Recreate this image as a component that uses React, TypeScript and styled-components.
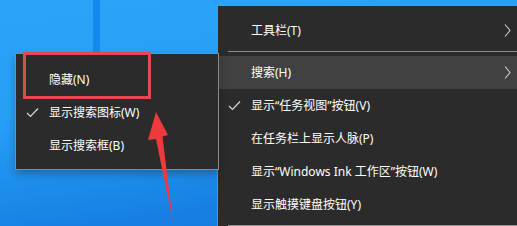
import styled, { createGlobalStyle } from "styled-components";

const GlobalStyle = createGlobalStyle`
  html, body {
    margin: 0;
    padding: 0;
    overflow: hidden;
  }

  body {
    font-family: "Noto Sans", "Noto Sans CJK SC", sans-serif;
  }
`;

type MenuItemData = {
  label: string;
  checked?: boolean;
  submenu?: boolean;
  active?: boolean;
  separatorAfter?: boolean;
};

const taskbarItems: MenuItemData[] = [
  { label: "工具栏(T)", submenu: true, separatorAfter: true },
  { label: "搜索(H)", submenu: true, active: true },
  { label: "显示“任务视图”按钮(V)", checked: true },
  { label: "在任务栏上显示人脉(P)" },
  { label: "显示“Windows Ink 工作区”按钮(W)" },
  { label: "显示触摸键盘按钮(Y)", separatorAfter: true },
];

const searchItems: MenuItemData[] = [
  { label: "隐藏(N)" },
  { label: "显示搜索图标(W)", checked: true },
  { label: "显示搜索框(B)" },
];

function CheckMark() {
  return (
    <svg width="13" height="11" viewBox="0 0 13 11">
      <path d="M1 6 L4.5 9.5 L12 1.5" fill="none" stroke="#d8d8d8" strokeWidth="1.2" />
    </svg>
  );
}

function Chevron() {
  return (
    <svg width="7" height="13" viewBox="0 0 7 13">
      <path d="M1 0.5 L6 6.5 L1 12.5" fill="none" stroke="#cfcfcf" strokeWidth="1.1" />
    </svg>
  );
}

function Menu({ items }: { items: MenuItemData[] }) {
  return (
    <>
      {items.map((item) => (
        <div key={item.label}>
          <Row active={item.active}>
            <CheckSlot>{item.checked && <CheckMark />}</CheckSlot>
            <Label>{item.label}</Label>
            {item.submenu && (
              <ArrowSlot>
                <Chevron />
              </ArrowSlot>
            )}
          </Row>
          {item.separatorAfter && <Separator />}
        </div>
      ))}
    </>
  );
}

function RedArrow() {
  return (
    <ArrowSvg width="40" height="120" viewBox="140 108 40 120">
      <polygon
        points="156,112 168,135 162.5,136.5 173,223 156,139 148,140"
        fill="#ee3a3c"
      />
    </ArrowSvg>
  );
}

export default function App() {
  return (
    <Desktop>
      <GlobalStyle />
      <Beam />
      <TaskbarMenu>
        <Menu items={taskbarItems} />
      </TaskbarMenu>
      <SearchMenu>
        <Menu items={searchItems} />
      </SearchMenu>
      <Highlight />
      <RedArrow />
    </Desktop>
  );
}

const Desktop = styled.div`
  position: relative;
  width: 517px;
  height: 226px;
  overflow: hidden;

  background: linear-gradient(
    172deg,
    #2aa3f8 0%,
    #26a0f7 40%,
    #1d8eec 62%,
    #1680e2 80%,
    #1378dc 100%
  );
`;

const Beam = styled.div`
  position: absolute;
  left: 93px;
  top: 0;
  width: 7px;
  height: 60px;

  background-color: #138aea;
`;

const MenuPanel = styled.div`
  position: absolute;
  display: flex;
  flex-direction: column;

  box-sizing: border-box;

  border: 1px solid #8a8a8a;

  color: #ffffff;
  background-color: #2b2b2b;

  font-size: 12px;
`;

const TaskbarMenu = styled(MenuPanel)`
  left: 217px;
  top: 5px;
  width: 310px;
  height: 240px;
  padding-top: 8px;

  border-right: none;
  border-bottom: none;
`;

const SearchMenu = styled(MenuPanel)`
  left: 15px;
  top: 53px;
  width: 204px;
  height: 117px;
  padding-top: 9px;

  box-shadow: 0 4px 8px rgba(0, 0, 0, 0.25);
`;

const Row = styled.div<{ active?: boolean }>`
  display: flex;
  align-items: center;

  height: 33px;
  padding-left: 10px;

  background-color: ${({ active }) => (active ? "#414141" : "transparent")};
`;

const CheckSlot = styled.span`
  display: flex;
  align-items: center;

  width: 23px;
`;

const Label = styled.span`
  flex: 1;

  white-space: nowrap;
  line-height: 1;
`;

const ArrowSlot = styled.span`
  display: flex;

  width: 23px;
`;

const Separator = styled.div`
  height: 1px;
  margin: 4px 4px 4px 10px;

  background-color: #8d8d8d;
`;

const Highlight = styled.div`
  position: absolute;
  left: 23px;
  top: 52px;
  width: 128px;
  height: 47px;

  box-sizing: border-box;

  border: 3px solid #e04a50;
`;

const ArrowSvg = styled.svg`
  position: absolute;
  left: 140px;
  top: 108px;
`;
